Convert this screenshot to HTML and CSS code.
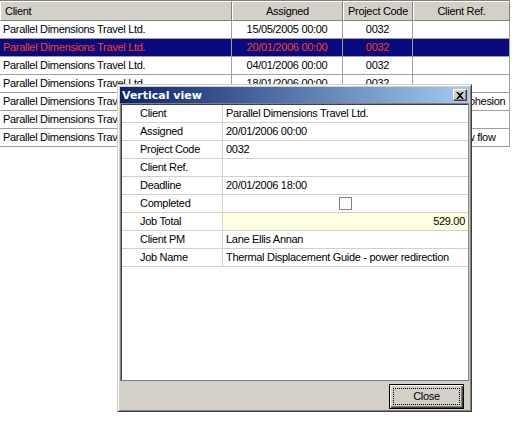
FILE: index.html
```html
<!DOCTYPE html>
<html lang="en">
<head>
    <meta charset="UTF-8">
    <title>Vertical view</title>
    <link rel="stylesheet" href="styles.css">
</head>
<body>
   <section class="grid">
    <div class="row head">
        <div class="cell hcell left">Client</div>
        <div class="cell hcell">Assigned</div>
        <div class="cell hcell">Project Code</div>
        <div class="cell hcell">Client Ref.</div>
    </div>
    <div class="row">
        <div class="cell left">Parallel Dimensions Travel Ltd.</div>
        <div class="cell">15/05/2005 00:00</div>
        <div class="cell">0032</div>
        <div class="cell left"></div>
    </div>
    <div class="row selected">
        <div class="cell left">Parallel Dimensions Travel Ltd.</div>
        <div class="cell">20/01/2006 00:00</div>
        <div class="cell">0032</div>
        <div class="cell left"></div>
    </div>
    <div class="row">
        <div class="cell left">Parallel Dimensions Travel Ltd.</div>
        <div class="cell">04/01/2006 00:00</div>
        <div class="cell">0032</div>
        <div class="cell left"></div>
    </div>
    <div class="row">
        <div class="cell left">Parallel Dimensions Travel Ltd.</div>
        <div class="cell">18/01/2006 00:00</div>
        <div class="cell">0032</div>
        <div class="cell left"></div>
    </div>
    <div class="row">
        <div class="cell left">Parallel Dimensions Travel Ltd.</div>
        <div class="cell">19/01/2006 00:00</div>
        <div class="cell">0032</div>
        <div class="cell left">Molecular cohesion</div>
    </div>
    <div class="row">
        <div class="cell left">Parallel Dimensions Travel Ltd.</div>
        <div class="cell">21/01/2006 00:00</div>
        <div class="cell">0032</div>
        <div class="cell left"></div>
    </div>
    <div class="row">
        <div class="cell left">Parallel Dimensions Travel Ltd.</div>
        <div class="cell">22/01/2006 00:00</div>
        <div class="cell">0032</div>
        <div class="cell left">Plasma slow flow</div>
    </div>
   </section>

   <div class="dialog">
    <div class="caption">
        <span>Vertical view</span>
        <div class="capBtn">
            <svg width="8" height="7" viewBox="0 0 8 7"><path d="M0 0h2l2 2 2-2h2L5 3.5 8 7H6L4 5 2 7H0l3-3.5z" fill="#000"/></svg>
        </div>
    </div>
    <div class="panel">
        <div class="prop"><div class="pname">Client</div><div class="pval">Parallel Dimensions Travel Ltd.</div></div>
        <div class="prop"><div class="pname">Assigned</div><div class="pval">20/01/2006 00:00</div></div>
        <div class="prop"><div class="pname">Project Code</div><div class="pval">0032</div></div>
        <div class="prop"><div class="pname">Client Ref.</div><div class="pval"></div></div>
        <div class="prop"><div class="pname">Deadline</div><div class="pval">20/01/2006 18:00</div></div>
        <div class="prop"><div class="pname">Completed</div><div class="pval check"><span class="box"></span></div></div>
        <div class="prop"><div class="pname">Job Total</div><div class="pval money">529.00</div></div>
        <div class="prop"><div class="pname">Client PM</div><div class="pval">Lane Ellis Annan</div></div>
        <div class="prop"><div class="pname">Job Name</div><div class="pval">Thermal Displacement Guide - power redirection</div></div>
    </div>
    <div class="footer">
        <div class="button"><span>Close</span></div>
    </div>
   </div>
</body>
</html>
```

FILE: styles.css
```css
body{
    margin: 0px;
    background: white;
    font-family: 'Liberation Sans', Arial, sans-serif;
    font-size: 11px;
    letter-spacing: -0.3px;
    color: black;
    position: relative;
    height: 424px;
    overflow: hidden;
}
.grid{
    width: 510px;
    border-top: 1px solid #808080;
}
.row{
    display: grid;
    grid-template-columns: 232px 111px 70px 97px;
    height: 18px;
}
.cell{
    box-sizing: border-box;
    border-right: 1px solid #a0a0a0;
    border-bottom: 1px solid #a0a0a0;
    line-height: 17px;
    text-align: center;
    white-space: nowrap;
    overflow: hidden;
}
.left{
    text-align: left;
    padding-left: 3px;
}
.head{
    height: 20px;
}
.hcell{
    background: #d4d0c8;
    border-top: 1px solid white;
    border-left: 1px solid white;
    border-right: 1px solid #808080;
    border-bottom: 1px solid #808080;
    line-height: 18px;
}
.hcell.left{
    padding-left: 4px;
}
.selected .cell{
    background: #0a0a80;
    color: #ff3c14;
}

.dialog{
    position: absolute;
    top: 84px;
    left: 117px;
    width: 355px;
    height: 328px;
    box-sizing: border-box;
    background: #d4d0c8;
    border: 1px solid;
    border-color: #d4d0c8 #404040 #404040 #d4d0c8;
    box-shadow: inset 1px 1px white, inset -1px -1px #808080;
    padding: 2px;
}
.caption{
    height: 16px;
    background: linear-gradient(to right, #0a246a, #a6caf0);
    color: white;
    font-family: 'DejaVu Sans', sans-serif;
    font-weight: bold;
    letter-spacing: 0;
    font-size: 11px;
    display: flex;
    align-items: center;
    justify-content: space-between;
    padding-left: 2px;
}
.capBtn{
    width: 14px;
    height: 12px;
    box-sizing: border-box;
    margin-right: 2px;
    background: #d4d0c8;
    border: 1px solid;
    border-color: white #404040 #404040 white;
    box-shadow: inset -1px -1px #808080;
    display: flex;
    align-items: center;
    justify-content: center;
}
.panel{
    height: 278px;
    box-sizing: border-box;
    background: white;
    border: 1px solid #808080;
    box-shadow: inset 1px 1px #404040;
    padding: 1px 0 0 1px;
}
.prop{
    display: grid;
    grid-template-columns: 101px 1fr;
    height: 18px;
    box-sizing: border-box;
    border-bottom: 1px solid #d4d0c8;
    line-height: 17px;
}
.pname{
    padding-left: 18px;
    border-right: 1px solid #d4d0c8;
    white-space: nowrap;
}
.pval{
    padding-left: 3px;
    white-space: nowrap;
    overflow: hidden;
}
.check{
    display: flex;
    align-items: center;
    justify-content: center;
    padding-left: 0;
}
.box{
    width: 13px;
    height: 13px;
    box-sizing: border-box;
    border: 1px solid #808080;
    background: white;
}
.money{
    background: #ffffe1;
    text-align: right;
    padding-right: 3px;
}
.footer{
    height: 28px;
    display: flex;
    justify-content: flex-end;
    align-items: flex-start;
}
.button{
    margin-top: 3px;
    margin-right: 5px;
    width: 75px;
    height: 25px;
    box-sizing: border-box;
    border: 1px solid black;
    background: #d4d0c8;
    box-shadow: inset 1px 1px white, inset -1px -1px #404040, inset -2px -2px #808080;
    padding: 3px;
    display: flex;
}
.button span{
    flex: 1;
    border: 1px dotted black;
    text-align: center;
    line-height: 15px;
}
```
